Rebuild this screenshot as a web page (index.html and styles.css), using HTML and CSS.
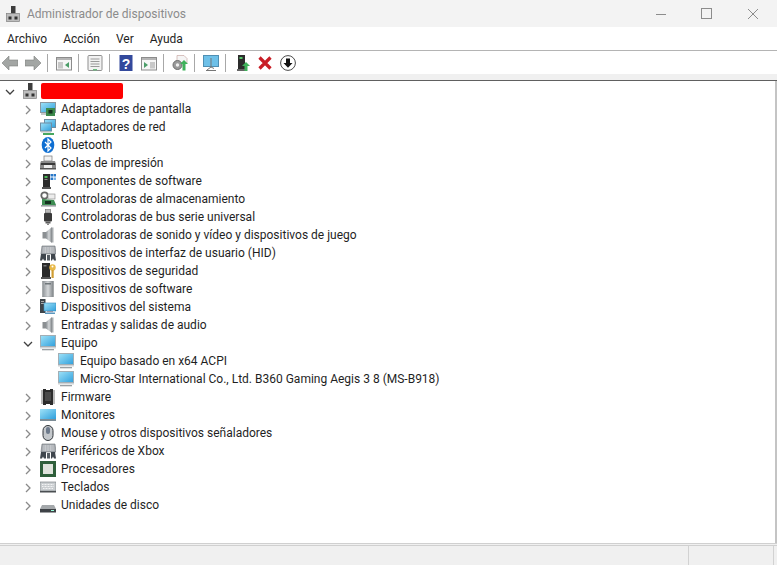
FILE: index.html
```html
<!DOCTYPE html>
<html lang="es">
<head>
<meta charset="utf-8">
<title>Administrador de dispositivos</title>
<link rel="stylesheet" href="styles.css">
</head>
<body>
<svg class="defs" width="0" height="0" aria-hidden="true">
<defs>
<linearGradient id="scr" x1="0" y1="0" x2="1" y2="1"><stop offset="0" stop-color="#9fe2f8"/><stop offset="1" stop-color="#2f9fdc"/></linearGradient>
<linearGradient id="steel" x1="0" y1="0" x2="1" y2="0"><stop offset="0" stop-color="#8d9296"/><stop offset=".5" stop-color="#d5d8da"/><stop offset="1" stop-color="#7d8286"/></linearGradient>
<symbol id="chev-r" viewBox="0 0 10 10"><path d="M3 1l4 4-4 4" fill="none" stroke="#8a8a8a" stroke-width="1.300"/></symbol>
<symbol id="chev-d" viewBox="0 0 10 10"><path d="M1 3l4 4 4-4" fill="none" stroke="#404040" stroke-width="1.300"/></symbol>
<symbol id="i-host" viewBox="0 0 16 16"><rect x="6" y="0" width="4.500" height="7.500" fill="#3d3d3d"/><rect x="1.500" y="7.500" width="13" height="8" fill="#bdbdbd" stroke="#808080" stroke-width=".7"/><rect x="3.500" y="10.500" width="3" height="3" fill="#333"/><rect x="9.500" y="10.500" width="3" height="3" fill="#333"/></symbol>
<symbol id="i-display" viewBox="0 0 16 16"><rect x=".5" y="1.500" width="15" height="10" fill="url(#scr)" stroke="#8a97a0"/><rect x="1" y="12" width="12" height="2" fill="#c4c8ca"/><rect x="6" y="7" width="9" height="8" fill="#3c8a4c"/><rect x="8.500" y="9" width="4" height="3.500" fill="#17331f"/></symbol>
<symbol id="i-net" viewBox="0 0 16 16"><rect x="4.500" y=".5" width="11" height="8" fill="url(#scr)" stroke="#6f8ea3"/><rect x=".5" y="4" width="11" height="8" fill="url(#scr)" stroke="#6f8ea3"/><rect x="1" y="12" width="10" height="1.500" fill="#b8bec2"/><rect x="3" y="14" width="11" height="2" fill="#48a860"/></symbol>
<symbol id="i-bt" viewBox="0 0 16 16"><ellipse cx="8" cy="8" rx="6.300" ry="8" fill="#0f6fd2"/><path d="M5 5l6 6-3 3V2l3 3-6 6" fill="none" stroke="#fff" stroke-width="1.200"/></symbol>
<symbol id="i-print" viewBox="0 0 16 16"><rect x="4" y="1" width="8" height="5" fill="#f2f2f2" stroke="#777" stroke-width=".7"/><path d="M1 6h14l1 3v4H0V9z" fill="#8b8b8b"/><rect x="1" y="8" width="14" height="2" fill="#3a3a3a"/><rect x="4" y="10" width="8" height="3" fill="#efefef"/><rect x="0" y="13" width="16" height="1.500" fill="#555"/></symbol>
<symbol id="i-comp" viewBox="0 0 16 16"><rect x="3" y="1" width="7" height="13" fill="#2d2d2d"/><rect x="4.500" y="3" width="3" height="2" fill="#4dbb5a"/><rect x="4.500" y="6" width="3" height="1" fill="#888"/><rect x="2" y="14" width="9" height="2" fill="#555"/><rect x="10.500" y="1" width="2.500" height="2.500" fill="#2a78c8"/><rect x="13.500" y="1" width="2.500" height="2.500" fill="#2a78c8"/><rect x="10.500" y="4.500" width="2.500" height="2.500" fill="#2a78c8"/><rect x="13.500" y="4.500" width="2.500" height="2.500" fill="#7db5e8"/></symbol>
<symbol id="i-store" viewBox="0 0 16 16"><circle cx="4.500" cy="4.500" r="3.200" fill="none" stroke="#666" stroke-width="1.800"/><path d="M2 8l12 1 2 5-14 1z" fill="#3d8c52"/><rect x="5" y="10" width="6" height="3" fill="#15301f"/><rect x="1" y="14" width="15" height="1.600" fill="#9aa0a2"/><rect x="8" y="3" width="7" height="5" fill="#ececec" stroke="#888" stroke-width=".6"/></symbol>
<symbol id="i-usb" viewBox="0 0 16 16"><rect x="5.500" y="0" width="5" height="4" fill="#bbb" stroke="#666" stroke-width=".6"/><rect x="4" y="4" width="8" height="8.500" rx="1" fill="#3a3a3a"/><rect x="5.500" y="12.500" width="5" height="2" fill="#5c5c5c"/><rect x="7" y="14.500" width="2" height="1.500" fill="#888"/></symbol>
<symbol id="i-sound" viewBox="0 0 16 16"><rect x="2.500" y="5" width="4" height="6.500" fill="#8b8f92"/><path d="M6 5l6-5v16l-6-4.500z" fill="url(#steel)"/><path d="M12 0.500h1.500v15H12z" fill="#a9adb0"/></symbol>
<symbol id="i-hid" viewBox="0 0 16 16"><path d="M2 1h13l1 8H1z" fill="#a9adb2" stroke="#6a6f74" stroke-width=".6"/><path d="M3.500 3h10M3.500 5h10M3.500 7h10" stroke="#e8eaec" stroke-dasharray="1 .6"/><path d="M1 9h5v6.500H4l-1-2-1 2H0z" fill="#3f464d"/><path d="M7 10h3v5.500H7z" fill="#555c63"/><path d="M11 9h4l1 6.500h-2l-1-2-1 2h-1z" fill="#3f464d"/></symbol>
<symbol id="i-sec" viewBox="0 0 16 16"><rect x="2" y="0" width="8" height="15" fill="#2a2a2a"/><rect x="3.500" y="2" width="3" height="1.500" fill="#777"/><rect x="1" y="14" width="10" height="2" fill="#555"/><circle cx="12.500" cy="4.500" r="3.200" fill="#e8b94a"/><circle cx="12.500" cy="3.600" r="1" fill="#fff"/><rect x="11.500" y="7" width="2.200" height="8" fill="#cf9d33"/></symbol>
<symbol id="i-soft" viewBox="0 0 16 16"><rect x="2.500" y="0" width="11" height="16" fill="url(#steel)" stroke="#8a8f92" stroke-width=".5"/><rect x="5" y="2" width="6" height="1.500" fill="#70777b"/></symbol>
<symbol id="i-sys" viewBox="0 0 16 16"><rect x="0" y="0" width="5.500" height="14" fill="#3d444a"/><rect x="1" y="2" width="3" height="1" fill="#aaa"/><rect x="1" y="4" width="3" height="1" fill="#aaa"/><rect x="4" y="4" width="12" height="8" fill="url(#scr)" stroke="#3f8dbd" stroke-width=".6"/><rect x="7" y="12" width="6" height="1.200" fill="#99a"/><rect x="5" y="13.500" width="10" height="1.500" fill="#5b97bf"/></symbol>
<symbol id="i-pc" viewBox="0 0 16 16"><rect x=".5" y="0.500" width="15" height="11" fill="url(#scr)" stroke="#a2aeb5"/><rect x="0" y="12" width="16" height="1.500" fill="#cfd3d6"/><rect x="2" y="14" width="12" height="1.300" fill="#9aa0a4"/></symbol>
<symbol id="i-fw" viewBox="0 0 16 16"><path d="M3 0h3v1h4V0h3v16h-3v-1H6v1H3z" fill="#2c2c2c"/><path d="M1 2h2M1 4h2M1 6h2M1 8h2M1 10h2M1 12h2M1 14h2M13 2h2M13 4h2M13 6h2M13 8h2M13 10h2M13 12h2M13 14h2" stroke="#777"/><rect x="5" y="3" width="6" height="9" fill="#4a4a4a"/></symbol>
<symbol id="i-mon" viewBox="0 0 16 16"><rect x="0" y="2" width="16" height="10" fill="url(#scr)"/><rect x="0" y="12" width="16" height="2" fill="#7c8c96"/></symbol>
<symbol id="i-mouse" viewBox="0 0 16 16"><rect x="3" y="0.500" width="10" height="15" rx="5" fill="#c4c8cc" stroke="#30353a"/><rect x="6" y="2" width="4" height="7" rx="2" fill="#6d7a8c"/></symbol>
<symbol id="i-cpu" viewBox="0 0 16 16"><rect x="0" y="0" width="16" height="16" fill="#2f5f3b"/><rect x="3" y="3" width="10" height="10" fill="#dfe3dc"/></symbol>
<symbol id="i-kbd" viewBox="0 0 16 16"><rect x="0" y="3" width="16" height="9" fill="#c9cdd0" stroke="#70767a" stroke-width=".6"/><path d="M2 5.500h12M2 7.500h12M3 9.500h10" stroke="#f2f3f4" stroke-dasharray="1 .5"/><rect x="0" y="12" width="16" height="1.500" fill="#4b4f52"/></symbol>
<symbol id="i-disk" viewBox="0 0 16 16"><path d="M2 8h12l2 4H0z" fill="#a4a8ab"/><rect x="0" y="12" width="16" height="3.500" fill="#3e4246"/><rect x="11" y="13" width="3" height="1" fill="#9fd"/></symbol>
</defs>
</svg>

<div class="window">
<header class="titlebar">
<svg class="title-icon" width="16" height="16"><use href="#i-host"/></svg>
<span class="title-text">Administrador de dispositivos</span>
<div class="win-controls">
<svg width="12" height="12" viewBox="0 0 12 12"><path d="M1 6.500h10" stroke="#8c8c8c"/></svg>
<svg width="12" height="12" viewBox="0 0 12 12"><rect x=".5" y=".5" width="10" height="10" fill="none" stroke="#8c8c8c"/></svg>
<svg width="12" height="12" viewBox="0 0 12 12"><path d="M1 1l10 10M11 1L1 11" stroke="#8c8c8c"/></svg>
</div>
</header>

<nav class="menubar">
<span>Archivo</span><span>Acción</span><span>Ver</span><span>Ayuda</span>
</nav>

<div class="toolbar">
<span class="tool"><svg width="16" height="16" viewBox="0 0 16 16"><path d="M0 8l7-7v4h9v6H7v4z" fill="#a3a6a4" stroke="#7d807e" stroke-width=".6"/></svg></span>
<span class="tool"><svg width="16" height="16" viewBox="0 0 16 16"><path d="M16 8L9 1v4H0v6h9v4z" fill="#a3a6a4" stroke="#7d807e" stroke-width=".6"/></svg></span>
<span class="sep"></span>
<span class="tool"><svg width="16" height="16" viewBox="0 0 16 16"><rect x=".5" y="2.500" width="15" height="12.500" fill="#f6f6f6" stroke="#8c8c8c"/><rect x="1" y="3" width="14" height="2" fill="#b5b5b5"/><rect x="2" y="7" width="5" height="6.500" fill="#c8c8c8"/><path d="M13 7v6L9 10z" fill="#4b9d68"/></svg></span>
<span class="sep"></span>
<span class="tool"><svg width="16" height="16" viewBox="0 0 16 16"><rect x="1" y=".5" width="14" height="15" rx="1" fill="#f2f2f2" stroke="#8f8f8f"/><path d="M3.500 4h9M3.500 6.500h9M3.500 9h9M3.500 11.500h9" stroke="#9a9a9a"/><rect x="6" y="14" width="4" height="1.500" fill="#6cbb80"/></svg></span>
<span class="sep"></span>
<span class="tool"><svg width="16" height="16" viewBox="0 0 16 16"><rect x="1.500" y="0" width="13" height="16" fill="#33499c"/><text class="help-q" x="8" y="13.500" text-anchor="middle">?</text></svg></span>
<span class="tool"><svg width="16" height="16" viewBox="0 0 16 16"><rect x=".5" y="2.500" width="15" height="12.500" fill="#f6f6f6" stroke="#8c8c8c"/><rect x="1" y="3" width="14" height="2" fill="#b5b5b5"/><rect x="9" y="7" width="5" height="6.500" fill="#c8c8c8"/><path d="M3 7v6l4-3z" fill="#4b9d68"/></svg></span>
<span class="sep"></span>
<span class="tool"><svg width="16" height="16" viewBox="0 0 16 16"><path d="M5 .5h7l3 3V8H5z" fill="#f5f5f5" stroke="#c9a9a5" stroke-width=".7"/><circle cx="5.500" cy="10" r="4.500" fill="#9a9a9a" stroke="#6e6e6e"/><circle cx="5.500" cy="10" r="1.700" fill="#efefef"/><path d="M12 5l4 4h-2.500v6.500h-3V9H8z" fill="#3fb25b"/></svg></span>
<span class="sep"></span>
<span class="tool"><svg width="16" height="16" viewBox="0 0 16 16"><rect x=".5" y=".5" width="15" height="11" fill="#6ec0e8" stroke="#4f8fb3"/><path d="M8 3v9l-4 3M8 12l3 1.500" stroke="#777" fill="none"/><path d="M3 15.500h10" stroke="#777"/></svg></span>
<span class="sep"></span>
<span class="tool"><svg width="16" height="16" viewBox="0 0 16 16"><rect x="4" y="0" width="7" height="14" fill="#2c2c2c"/><rect x="5.500" y="2" width="3" height="2" fill="#55c468"/><rect x="3" y="14" width="9" height="2" fill="#666"/><path d="M12 7l4 4h-2.500v5h-3v-5H8z" fill="#3fb25b"/></svg></span>
<span class="tool"><svg width="16" height="16" viewBox="0 0 16 16"><path d="M2.500 2.500l11 11M13.500 2.500l-11 11" stroke="#c81e26" stroke-width="3.200"/></svg></span>
<span class="tool"><svg width="16" height="16" viewBox="0 0 16 16"><circle cx="8" cy="8" r="7.400" fill="#fff" stroke="#4b4b4b"/><path d="M6 3.500h4V8h2.500L8 12.800 3.500 8H6z" fill="#111"/></svg></span>
</div>
<div class="toolbar-foot"></div>

<main class="tree">
<div class="row root"><svg class="chev" width="10" height="10"><use href="#chev-d"/></svg><svg class="icon" width="16" height="16"><use href="#i-host"/></svg><span class="redact"></span></div>
<div class="row"><svg class="chev" width="10" height="10"><use href="#chev-r"/></svg><svg class="icon" width="16" height="16"><use href="#i-display"/></svg><span>Adaptadores de pantalla</span></div>
<div class="row"><svg class="chev" width="10" height="10"><use href="#chev-r"/></svg><svg class="icon" width="16" height="16"><use href="#i-net"/></svg><span>Adaptadores de red</span></div>
<div class="row"><svg class="chev" width="10" height="10"><use href="#chev-r"/></svg><svg class="icon" width="16" height="16"><use href="#i-bt"/></svg><span>Bluetooth</span></div>
<div class="row"><svg class="chev" width="10" height="10"><use href="#chev-r"/></svg><svg class="icon" width="16" height="16"><use href="#i-print"/></svg><span>Colas de impresión</span></div>
<div class="row"><svg class="chev" width="10" height="10"><use href="#chev-r"/></svg><svg class="icon" width="16" height="16"><use href="#i-comp"/></svg><span>Componentes de software</span></div>
<div class="row"><svg class="chev" width="10" height="10"><use href="#chev-r"/></svg><svg class="icon" width="16" height="16"><use href="#i-store"/></svg><span>Controladoras de almacenamiento</span></div>
<div class="row"><svg class="chev" width="10" height="10"><use href="#chev-r"/></svg><svg class="icon" width="16" height="16"><use href="#i-usb"/></svg><span>Controladoras de bus serie universal</span></div>
<div class="row"><svg class="chev" width="10" height="10"><use href="#chev-r"/></svg><svg class="icon" width="16" height="16"><use href="#i-sound"/></svg><span>Controladoras de sonido y vídeo y dispositivos de juego</span></div>
<div class="row"><svg class="chev" width="10" height="10"><use href="#chev-r"/></svg><svg class="icon" width="16" height="16"><use href="#i-hid"/></svg><span>Dispositivos de interfaz de usuario (HID)</span></div>
<div class="row"><svg class="chev" width="10" height="10"><use href="#chev-r"/></svg><svg class="icon" width="16" height="16"><use href="#i-sec"/></svg><span>Dispositivos de seguridad</span></div>
<div class="row"><svg class="chev" width="10" height="10"><use href="#chev-r"/></svg><svg class="icon" width="16" height="16"><use href="#i-soft"/></svg><span>Dispositivos de software</span></div>
<div class="row"><svg class="chev" width="10" height="10"><use href="#chev-r"/></svg><svg class="icon" width="16" height="16"><use href="#i-sys"/></svg><span>Dispositivos del sistema</span></div>
<div class="row"><svg class="chev" width="10" height="10"><use href="#chev-r"/></svg><svg class="icon" width="16" height="16"><use href="#i-sound"/></svg><span>Entradas y salidas de audio</span></div>
<div class="row"><svg class="chev" width="10" height="10"><use href="#chev-d"/></svg><svg class="icon" width="16" height="16"><use href="#i-pc"/></svg><span>Equipo</span></div>
<div class="row child"><svg class="icon" width="16" height="16"><use href="#i-pc"/></svg><span>Equipo basado en x64 ACPI</span></div>
<div class="row child"><svg class="icon" width="16" height="16"><use href="#i-pc"/></svg><span>Micro-Star International Co., Ltd. B360 Gaming Aegis 3 8 (MS-B918)</span></div>
<div class="row"><svg class="chev" width="10" height="10"><use href="#chev-r"/></svg><svg class="icon" width="16" height="16"><use href="#i-fw"/></svg><span>Firmware</span></div>
<div class="row"><svg class="chev" width="10" height="10"><use href="#chev-r"/></svg><svg class="icon" width="16" height="16"><use href="#i-mon"/></svg><span>Monitores</span></div>
<div class="row"><svg class="chev" width="10" height="10"><use href="#chev-r"/></svg><svg class="icon" width="16" height="16"><use href="#i-mouse"/></svg><span>Mouse y otros dispositivos señaladores</span></div>
<div class="row"><svg class="chev" width="10" height="10"><use href="#chev-r"/></svg><svg class="icon" width="16" height="16"><use href="#i-hid"/></svg><span>Periféricos de Xbox</span></div>
<div class="row"><svg class="chev" width="10" height="10"><use href="#chev-r"/></svg><svg class="icon" width="16" height="16"><use href="#i-cpu"/></svg><span>Procesadores</span></div>
<div class="row"><svg class="chev" width="10" height="10"><use href="#chev-r"/></svg><svg class="icon" width="16" height="16"><use href="#i-kbd"/></svg><span>Teclados</span></div>
<div class="row"><svg class="chev" width="10" height="10"><use href="#chev-r"/></svg><svg class="icon" width="16" height="16"><use href="#i-disk"/></svg><span>Unidades de disco</span></div>
</main>

<footer class="statusbar">
<span class="status-main"></span><span class="status-cell"></span>
</footer>
</div>
</body>
</html>
```

FILE: styles.css
```css
* { box-sizing: border-box; }
html, body { margin: 0; padding: 0; }
body {
  width: 777px;
  height: 565px;
  overflow: hidden;
  background: #fff;
  color: #1f1f1f;
  font-family: Roboto, "Open Sans", sans-serif;
  font-size: 12px;
}
.defs { display: block; height: 0; }
.window { display: flex; flex-direction: column; height: 565px; }

.titlebar {
  height: 27px;
  flex: none;
  display: flex;
  align-items: center;
  background: #f3f3f3;
  padding-left: 5px;
}
.title-text { margin-left: 6px; color: #8b8b8b; font-size: 12px; }
.title-icon { flex: none; }
.win-controls { margin-left: auto; display: flex; gap: 34px; padding-right: 18px; }

.menubar {
  height: 24px;
  flex: none;
  display: flex;
  align-items: center;
  gap: 16px;
  padding-left: 7px;
  background: #fff;
  border-bottom: 1px solid #b4b4b4;
}

.toolbar {
  height: 23px;
  flex: none;
  display: flex;
  align-items: center;
  background: #fff;
}
.tool { width: 23px; height: 22px; padding-left: 2px; display: flex; align-items: center; flex: none; }
.sep { width: 8px; height: 18px; flex: none; }
.sep::before { content: ""; display: block; width: 1px; height: 18px; margin-left: 1px; background: #a8a8a8; }
.help-q { font-family: "Liberation Sans", sans-serif; font-size: 14px; font-weight: 700; fill: #fff; }
.toolbar-foot {
  height: 7px;
  flex: none;
  background: #f0f0f0;
  border-bottom: 1px solid #606060;
}

.tree {
  flex: 1;
  padding-top: 1px;
  background: #fff;
  border-right: 2px solid #c4c4c4;
}
.row { height: 18px; display: flex; align-items: center; padding-left: 23px; }
.row.root { padding-left: 5px; }
.chev { flex: none; margin-right: 7px; margin-top: 2px; }
.icon { flex: none; margin-right: 5px; }
.row.child { padding-left: 58px; }
.row.child .icon { margin-right: 6px; }
.redact { width: 82px; height: 16px; background: #fe0000; border-radius: 2px; margin-left: -2px; }

.statusbar {
  height: 22px;
  flex: none;
  display: flex;
  background: #f0f0f0;
  border-top: 3px double #d0d0d0;
}
.status-main { width: 689px; border-right: 1px solid #d2d2d2; }
.status-cell { width: 85px; border-right: 1px solid #d2d2d2; }
```
